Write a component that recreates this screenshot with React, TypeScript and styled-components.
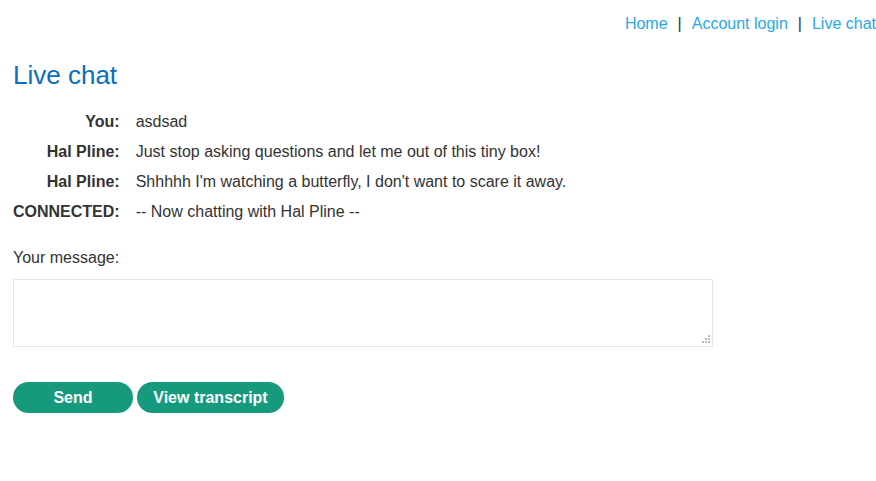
import React from "react";
import styled, { createGlobalStyle } from "styled-components";

const Global = createGlobalStyle`
  html, body { margin: 0; padding: 0; background: #fff; }
  body { font-family: "Liberation Sans", Arial, sans-serif; color: #333332; font-size: 16px; }
`;

const Page = styled.div`
  padding: 0 0 0 13px;
`;

const Nav = styled.nav`
  display: flex;
  justify-content: flex-end;
  align-items: center;
  gap: 10px;
  height: 46px;
  font-size: 16px;
  padding-top: 1px;
  box-sizing: border-box;
`;

const NavLink = styled.a`
  color: #29a9e3;
  text-decoration: none;
`;

const Sep = styled.span`
  color: #333332;
`;

const Title = styled.h1`
  margin: 12px 0 21px;
  font-size: 26px;
  font-weight: normal;
  color: #0a6ebd;
  line-height: 34px;
`;

const Chat = styled.div`
  display: grid;
  grid-template-columns: max-content 1fr;
  column-gap: 16px;
  row-gap: 12px;
  line-height: 18px;
`;

const Label = styled.div`
  font-weight: bold;
  text-align: right;
`;

const Msg = styled.div``;

const Form = styled.form`
  margin-top: 28px;
  display: flex;
  flex-direction: column;
`;

const FieldLabel = styled.label`
  line-height: 18px;
  margin-bottom: 12px;
`;

const AreaWrap = styled.div`
  position: relative;
  width: 700px;
  height: 68px;
`;

const Area = styled.textarea`
  display: block;
  width: 100%;
  height: 100%;
  box-sizing: border-box;
  border: 1px solid #e6e6e6;
  margin: 0;
  font-family: inherit;
  font-size: 16px;
  resize: none;
  outline: none;
`;

const Grip = styled.svg`
  position: absolute;
  right: 3px;
  bottom: 4px;
  pointer-events: none;
`;

const Buttons = styled.div`
  display: flex;
  gap: 4px;
  margin-top: 35px;
`;

const Button = styled.button<{ $w: number }>`
  width: ${(p) => p.$w}px;
  height: 31px;
  border: none;
  border-radius: 16px;
  background: #17997e;
  color: #fff;
  font-family: "Liberation Sans", Arial, sans-serif;
  font-weight: bold;
  font-size: 16px;
  padding: 0;
  cursor: pointer;
`;

const rows = [
  ["You:", "asdsad"],
  ["Hal Pline:", "Just stop asking questions and let me out of this tiny box!"],
  ["Hal Pline:", "Shhhhh I'm watching a butterfly, I don't want to scare it away."],
  ["CONNECTED:", "-- Now chatting with Hal Pline --"],
];

export default function App() {
  return (
    <>
      <Global />
      <Page>
        <Nav>
          <NavLink href="#">Home</NavLink>
          <Sep>|</Sep>
          <NavLink href="#">Account login</NavLink>
          <Sep>|</Sep>
          <NavLink href="#">Live chat</NavLink>
        </Nav>
        <Title>Live chat</Title>
        <Chat>
          {rows.map(([l, m], i) => (
            <React.Fragment key={i}>
              <Label>{l}</Label>
              <Msg>{m}</Msg>
            </React.Fragment>
          ))}
        </Chat>
        <Form onSubmit={(e) => e.preventDefault()}>
          <FieldLabel>Your message:</FieldLabel>
          <AreaWrap>
            <Area />
            <Grip width="8" height="8" viewBox="0 0 8 8">
              <g fill="#bdbdbd">
                <rect x="6" y="0" width="2" height="2" />
                <rect x="3" y="3" width="2" height="2" />
                <rect x="6" y="3" width="2" height="2" />
                <rect x="0" y="6" width="2" height="2" />
                <rect x="3" y="6" width="2" height="2" />
                <rect x="6" y="6" width="2" height="2" />
              </g>
            </Grip>
          </AreaWrap>
          <Buttons>
            <Button $w={120}>Send</Button>
            <Button $w={147}>View transcript</Button>
          </Buttons>
        </Form>
      </Page>
    </>
  );
}
